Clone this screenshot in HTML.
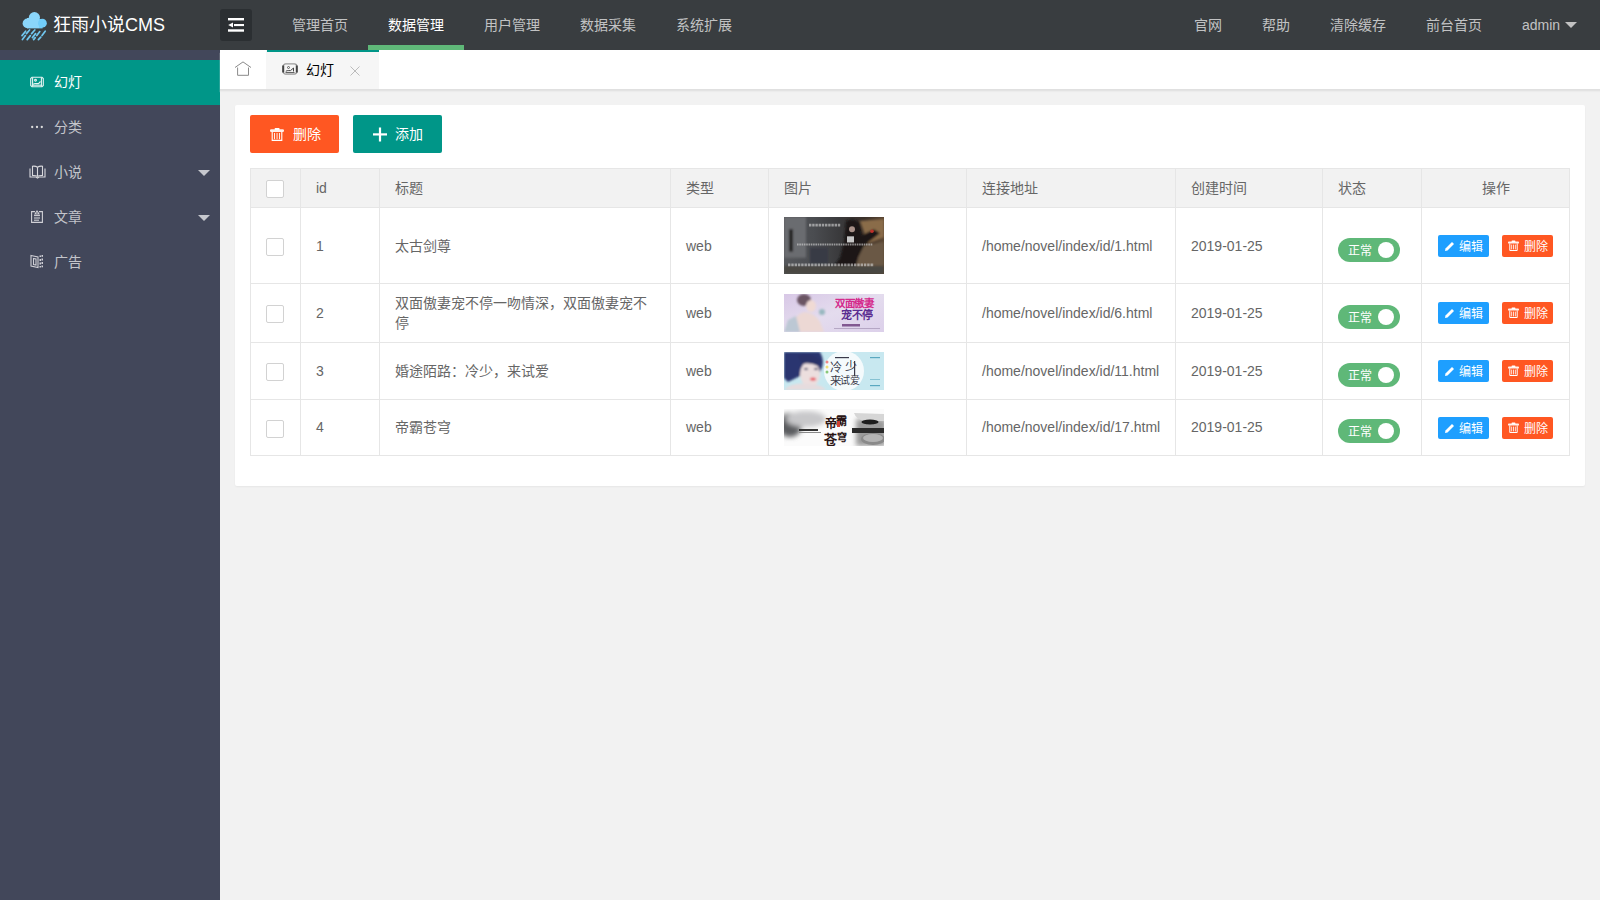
<!DOCTYPE html>
<html lang="zh-CN"><head><meta charset="utf-8">
<style>
*{margin:0;padding:0;box-sizing:border-box}
html,body{width:1600px;height:900px;overflow:hidden}
body{background:#f2f2f2;font-family:"Liberation Sans",sans-serif;font-size:14px;color:#666;position:relative}
.a{position:absolute}
.t{position:absolute;white-space:nowrap;line-height:14px;height:14px;font-size:14px}
#hd{left:0;top:0;width:1600px;height:50px;background:#393d40}
#side{left:0;top:50px;width:220px;height:850px;background:#42475a}
#tabs{left:220px;top:50px;width:1380px;height:39px;background:#fff;box-shadow:0 1px 0 #e0e0e0,0 2px 0 #e3e3e3,0 3px 1px #ececec}
#card{left:235px;top:105px;width:1350px;height:381px;background:#fff;border-radius:2px;box-shadow:0 1px 2px 0 rgba(0,0,0,.05)}
.nav{color:rgba(255,255,255,.7)}
.sd{color:rgba(255,255,255,.7)}
.tri{position:absolute;width:0;height:0;border-left:6px solid transparent;border-right:6px solid transparent;border-top:6px solid #c2c2c2}
.vl{position:absolute;width:1px;background:#e6e6e6}
.hl{position:absolute;height:1px;background:#e6e6e6}
.cb{position:absolute;left:266px;width:18px;height:18px;border:1px solid #d2d2d2;border-radius:2px;background:#fff}
.sw{position:absolute;left:1338px;width:62px;height:24px;border-radius:20px;background:#5fb878}
.sw i{position:absolute;left:40px;top:4px;width:16px;height:16px;border-radius:50%;background:#fff}
.sw span{position:absolute;left:10px;top:7px;font-size:12px;line-height:12px;color:#fff;white-space:nowrap}
.bx{position:absolute;height:22px;width:51px;border-radius:2px;color:#fff;font-size:12px;line-height:12px}
.bx span{position:absolute;left:22px;top:6px;white-space:nowrap}
.be span{left:21px}
.bx svg{position:absolute;left:6px;top:5px}
.be{left:1438px;background:#1e9fff}
.bd{left:1502px;background:#ff5722}
.img{position:absolute;left:784px;width:100px}
</style></head>
<body>
<!-- header -->
<div id="hd" class="a">
  <svg class="a" style="left:0;top:0" width="60" height="50" viewBox="0 0 60 50">
    <g fill="#8ad6fb"><circle cx="34.4" cy="17.6" r="5.6"/><circle cx="27.4" cy="23.4" r="4.8"/><rect x="27" y="18" width="12" height="10.4"/></g>
    <circle cx="42.4" cy="23.2" r="4.4" fill="#72cdf9"/>
    <rect x="39" y="19" width="3.6" height="9.4" fill="#72cdf9"/>
    <g stroke="#70c6ee" stroke-width="1.7" stroke-linecap="round"><line x1="25.6" y1="31.2" x2="22" y2="35.6"/><line x1="29.6" y1="30" x2="26.4" y2="33.6"/><line x1="34.8" y1="30" x2="31.6" y2="33.6"/><line x1="39.8" y1="31.6" x2="36.8" y2="35.6"/><line x1="45.2" y1="31.2" x2="42" y2="35.6"/><line x1="25.4" y1="35.6" x2="22.4" y2="39.6"/><line x1="30.4" y1="35.6" x2="27.2" y2="39.6"/><line x1="35.6" y1="33.6" x2="32.4" y2="37.6"/><line x1="35.2" y1="37.6" x2="33.6" y2="39.6"/><line x1="40.8" y1="37.2" x2="38.4" y2="39.6"/></g>
  </svg>
  <div class="t" style="left:53px;top:16px;font-size:18px;line-height:18px;height:18px;color:#fff">狂雨小说CMS</div>
  <div class="a" style="left:220px;top:9px;width:32px;height:32px;border-radius:3px;background:#2b2f32"></div>
  <svg class="a" style="left:226px;top:16px" width="20" height="18" viewBox="0 0 20 18">
    <g fill="#fff"><rect x="2" y="2" width="16" height="2.4"/><rect x="8" y="8" width="10" height="2.1"/><rect x="2" y="13.3" width="16" height="2.4"/><path d="M2.2 9.05 L7 6.6 L7 11.5 Z"/></g>
  </svg>
  <div class="t nav" style="left:292px;top:18px">管理首页</div>
  <div class="t" style="left:388px;top:18px;color:#fff">数据管理</div>
  <div class="t nav" style="left:484px;top:18px">用户管理</div>
  <div class="t nav" style="left:580px;top:18px">数据采集</div>
  <div class="t nav" style="left:676px;top:18px">系统扩展</div>
  <div class="a" style="left:368px;top:45px;width:96px;height:5px;background:#5fb878"></div>
  <div class="t nav" style="left:1194px;top:18px">官网</div>
  <div class="t nav" style="left:1262px;top:18px">帮助</div>
  <div class="t nav" style="left:1330px;top:18px">清除缓存</div>
  <div class="t nav" style="left:1426px;top:18px">前台首页</div>
  <div class="t nav" style="left:1522px;top:18px">admin</div>
  <div class="tri" style="left:1565px;top:22px"></div>
</div>

<!-- sidebar -->
<div id="side" class="a">
  <div class="a" style="left:0;top:10px;width:220px;height:45px;background:#009688"></div>
</div>
<svg class="a" style="left:30px;top:76px" width="14" height="12" viewBox="0 0 14 12">
  <g fill="none" stroke="#e6f4f2" stroke-width="1.1"><path d="M2 1.3 L12 1.3 L13.3 2.5 L13.3 9.5 L12 10.7 L2 10.7 L0.7 9.5 L0.7 2.5 Z"/><line x1="2.6" y1="1.5" x2="2.6" y2="10.5"/><line x1="11.4" y1="1.5" x2="11.4" y2="10.5"/><line x1="2.6" y1="9.2" x2="11.4" y2="9.2"/><circle cx="5.5" cy="4.2" r="0.9"/><path d="M3.2 8.3 Q4.5 7.2 6 7.6 L8.5 7.6 L10.5 5.5"/></g>
</svg>
<div class="t" style="left:54px;top:75px;color:#fff">幻灯</div>
<svg class="a" style="left:30px;top:125px" width="14" height="4" viewBox="0 0 14 4">
  <g fill="#ddd"><circle cx="2.2" cy="2" r="1.15"/><circle cx="7" cy="2" r="1.15"/><circle cx="11.8" cy="2" r="1.15"/></g>
</svg>
<div class="t sd" style="left:54px;top:120px">分类</div>
<svg class="a" style="left:29px;top:165px" width="17" height="14" viewBox="0 0 17 14">
  <g fill="none" stroke="#d8d8dc" stroke-width="1.1"><path d="M8.5 2.2 Q6.5 0.8 3.5 1.2 L3.5 10.5 Q6.5 10.2 8.5 11.3 Q10.5 10.2 13.5 10.5 L13.5 1.2 Q10.5 0.8 8.5 2.2 Z"/><line x1="8.5" y1="2.2" x2="8.5" y2="11.3"/><path d="M1 3.5 L1 12 L7 12 L8.5 13 L10 12 L16 12 L16 3.5"/></g>
</svg>
<div class="t sd" style="left:54px;top:165px">小说</div>
<div class="tri" style="left:198px;top:170px;border-top-color:rgba(255,255,255,.7)"></div>
<svg class="a" style="left:31px;top:210px" width="12" height="14" viewBox="0 0 12 14">
  <g fill="none" stroke="#d0d0d6" stroke-width="1.1"><path d="M4 1.6 L0.6 1.6 L0.6 12.4 L11.4 12.4 L11.4 1.6 L8 1.6"/><path d="M4 4 L6 1 L8 4 Z"/><line x1="3" y1="5.6" x2="9" y2="5.6"/><line x1="3" y1="8" x2="9" y2="8"/><line x1="3" y1="10.2" x2="8" y2="10.2"/></g>
</svg>
<div class="t sd" style="left:54px;top:210px">文章</div>
<div class="tri" style="left:198px;top:215px;border-top-color:rgba(255,255,255,.7)"></div>
<svg class="a" style="left:30px;top:254px" width="14" height="15" viewBox="0 0 14 15">
  <g fill="none" stroke="#d0d0d6" stroke-width="1.1"><path d="M1 1.5 L8 3 L8 13.5 L1 12 Z"/><path d="M3.5 4.5 L6 5 L6 11 L3.5 10.5 Z"/></g>
  <g fill="#d0d0d6"><rect x="9.5" y="1.5" width="1.5" height="1.5"/><rect x="11.5" y="1" width="1.5" height="1.8"/><rect x="9.5" y="5" width="1.5" height="2"/><rect x="11.5" y="4.5" width="1.5" height="2"/><rect x="9.5" y="8.5" width="1.5" height="2"/><rect x="11.5" y="8" width="1.5" height="2"/><rect x="9.5" y="12" width="1.5" height="1.5"/><rect x="11.5" y="11.5" width="1.5" height="1.8"/></g>
</svg>
<div class="t sd" style="left:54px;top:255px">广告</div>

<!-- tabs -->
<div id="tabs" class="a"></div>
<svg class="a" style="left:234px;top:60px" width="18" height="17" viewBox="0 0 18 17">
  <g fill="none" stroke="#8a8a8a" stroke-width="1"><path d="M1 7.5 L9 1.9 L17 7.5"/><path d="M3.6 7.5 L3.6 15.3 L14.5 15.3 L14.5 7.5"/></g>
</svg>
<div class="a" style="left:266px;top:50px;width:113px;height:39px;background:#f6f6f6"></div>
<div class="a" style="left:267px;top:50px;width:112px;height:2px;background:#009688"></div>
<svg class="a" style="left:282px;top:63px" width="16" height="12" viewBox="0 0 16 12">
  <g fill="none"><rect x="1.2" y="0.9" width="13.6" height="10.2" rx="2.5" stroke="#9a9a9a" stroke-width="1.3"/><line x1="1.2" y1="2.5" x2="1.2" y2="9.5" stroke="#444" stroke-width="2"/><line x1="14.8" y1="2.5" x2="14.8" y2="9.5" stroke="#444" stroke-width="2"/><circle cx="6.5" cy="4.5" r="1" stroke="#555" stroke-width="0.9"/><path d="M3.8 8.3 Q5 7.4 6.8 7.6 L8.5 7.6 L11.5 5 L11.5 8.5" stroke="#444" stroke-width="1"/><line x1="3.5" y1="9.6" x2="12.5" y2="9.6" stroke="#555" stroke-width="1"/></g>
</svg>
<div class="t" style="left:306px;top:63px;color:#000">幻灯</div>
<svg class="a" style="left:350px;top:66px" width="10" height="10" viewBox="0 0 10 10">
  <g stroke="#bbb" stroke-width="1"><line x1="0.5" y1="0.5" x2="9.5" y2="9.5"/><line x1="9.5" y1="0.5" x2="0.5" y2="9.5"/></g>
</svg>

<!-- card -->
<div id="card" class="a"></div>
<div class="a" style="left:250px;top:115px;width:89px;height:38px;border-radius:2px;background:#ff5722"></div>
<svg class="a" style="left:270px;top:128px" width="14" height="14" viewBox="0 0 14 14">
  <g fill="#fff"><rect x="0" y="1.3" width="14" height="2.6" rx="1.2" opacity=".9"/><rect x="4.6" y="0" width="5" height="2" rx="0.8"/><rect x="4.1" y="5" width="0.9" height="6.2"/><rect x="6.6" y="5" width="0.9" height="6.2"/><rect x="9.1" y="5" width="0.9" height="6.2"/></g>
  <path d="M2.2 3.8 L2.2 12.4 L11.8 12.4 L11.8 3.8" fill="none" stroke="#fff" stroke-width="1.1"/>
</svg>
<div class="t" style="left:293px;top:127px;color:#fff">删除</div>
<div class="a" style="left:353px;top:115px;width:89px;height:38px;border-radius:2px;background:#009688"></div>
<svg class="a" style="left:372px;top:127px" width="16" height="15" viewBox="0 0 16 15">
  <g fill="#fff"><rect x="1" y="6.3" width="14" height="2.2"/><rect x="6.9" y="0.5" width="2.2" height="14"/></g>
</svg>
<div class="t" style="left:395px;top:127px;color:#fff">添加</div>

<!-- table -->
<div class="a" style="left:250px;top:168px;width:1320px;height:288px;border:1px solid #e6e6e6;background:#fff"></div>
<div class="a" style="left:251px;top:169px;width:1318px;height:38px;background:#f2f2f2"></div>
<div class="hl" style="left:250px;top:207px;width:1320px"></div>
<div class="hl" style="left:250px;top:283px;width:1320px"></div>
<div class="hl" style="left:250px;top:342px;width:1320px"></div>
<div class="hl" style="left:250px;top:399px;width:1320px"></div>
<div class="vl" style="left:300px;top:168px;height:288px"></div>
<div class="vl" style="left:379px;top:168px;height:288px"></div>
<div class="vl" style="left:670px;top:168px;height:288px"></div>
<div class="vl" style="left:768px;top:168px;height:288px"></div>
<div class="vl" style="left:966px;top:168px;height:288px"></div>
<div class="vl" style="left:1175px;top:168px;height:288px"></div>
<div class="vl" style="left:1322px;top:168px;height:288px"></div>
<div class="vl" style="left:1421px;top:168px;height:288px"></div>

<!-- header row -->
<div class="cb" style="top:180px"></div>
<div class="t" style="left:316px;top:181px">id</div>
<div class="t" style="left:395px;top:181px">标题</div>
<div class="t" style="left:686px;top:181px">类型</div>
<div class="t" style="left:784px;top:181px">图片</div>
<div class="t" style="left:982px;top:181px">连接地址</div>
<div class="t" style="left:1191px;top:181px">创建时间</div>
<div class="t" style="left:1338px;top:181px">状态</div>
<div class="t" style="left:1482px;top:181px">操作</div>

<!-- row 1 -->
<div class="cb" style="top:238px"></div>
<div class="t" style="left:316px;top:239px">1</div>
<div class="t" style="left:395px;top:239px">太古剑尊</div>
<div class="t" style="left:686px;top:239px">web</div>
<div class="t" style="left:982px;top:239px">/home/novel/index/id/1.html</div>
<div class="t" style="left:1191px;top:239px">2019-01-25</div>
<div class="sw" style="top:238px"><span>正常</span><i></i></div>
<div class="bx be" style="top:235px"><svg width="11" height="12" viewBox="0 0 11 12"><path d="M1 11 L1.5 8.5 L8 2 L10 4 L3.5 10.5 Z" fill="#fff"/></svg><span>编辑</span></div>
<div class="bx bd" style="top:235px"><svg width="11" height="12" viewBox="0 0 11 12"><g fill="#fff"><rect x="0" y="1.6" width="11" height="2" rx="0.9" opacity=".92"/><rect x="3.6" y="0.5" width="3.8" height="1.6" rx="0.6"/><rect x="3.3" y="4.6" width="0.8" height="4.8"/><rect x="5.1" y="4.6" width="0.8" height="4.8"/><rect x="6.9" y="4.6" width="0.8" height="4.8"/></g><path d="M1.8 3.4 L1.8 10.5 L9.2 10.5 L9.2 3.4" fill="none" stroke="#fff" stroke-width="1"/></svg><span>删除</span></div>

<!-- row 2 -->
<div class="cb" style="top:305px"></div>
<div class="t" style="left:316px;top:306px">2</div>
<div class="t" style="left:395px;top:296px">双面傲妻宠不停一吻情深，双面傲妻宠不</div>
<div class="t" style="left:395px;top:316px">停</div>
<div class="t" style="left:686px;top:306px">web</div>
<div class="t" style="left:982px;top:306px">/home/novel/index/id/6.html</div>
<div class="t" style="left:1191px;top:306px">2019-01-25</div>
<div class="sw" style="top:305px"><span>正常</span><i></i></div>
<div class="bx be" style="top:302px"><svg width="11" height="12" viewBox="0 0 11 12"><path d="M1 11 L1.5 8.5 L8 2 L10 4 L3.5 10.5 Z" fill="#fff"/></svg><span>编辑</span></div>
<div class="bx bd" style="top:302px"><svg width="11" height="12" viewBox="0 0 11 12"><g fill="#fff"><rect x="0" y="1.6" width="11" height="2" rx="0.9" opacity=".92"/><rect x="3.6" y="0.5" width="3.8" height="1.6" rx="0.6"/><rect x="3.3" y="4.6" width="0.8" height="4.8"/><rect x="5.1" y="4.6" width="0.8" height="4.8"/><rect x="6.9" y="4.6" width="0.8" height="4.8"/></g><path d="M1.8 3.4 L1.8 10.5 L9.2 10.5 L9.2 3.4" fill="none" stroke="#fff" stroke-width="1"/></svg><span>删除</span></div>

<!-- row 3 -->
<div class="cb" style="top:363px"></div>
<div class="t" style="left:316px;top:364px">3</div>
<div class="t" style="left:395px;top:364px">婚途陌路：冷少，来试爱</div>
<div class="t" style="left:686px;top:364px">web</div>
<div class="t" style="left:982px;top:364px">/home/novel/index/id/11.html</div>
<div class="t" style="left:1191px;top:364px">2019-01-25</div>
<div class="sw" style="top:363px"><span>正常</span><i></i></div>
<div class="bx be" style="top:360px"><svg width="11" height="12" viewBox="0 0 11 12"><path d="M1 11 L1.5 8.5 L8 2 L10 4 L3.5 10.5 Z" fill="#fff"/></svg><span>编辑</span></div>
<div class="bx bd" style="top:360px"><svg width="11" height="12" viewBox="0 0 11 12"><g fill="#fff"><rect x="0" y="1.6" width="11" height="2" rx="0.9" opacity=".92"/><rect x="3.6" y="0.5" width="3.8" height="1.6" rx="0.6"/><rect x="3.3" y="4.6" width="0.8" height="4.8"/><rect x="5.1" y="4.6" width="0.8" height="4.8"/><rect x="6.9" y="4.6" width="0.8" height="4.8"/></g><path d="M1.8 3.4 L1.8 10.5 L9.2 10.5 L9.2 3.4" fill="none" stroke="#fff" stroke-width="1"/></svg><span>删除</span></div>

<!-- row 4 -->
<div class="cb" style="top:420px"></div>
<div class="t" style="left:316px;top:420px">4</div>
<div class="t" style="left:395px;top:420px">帝霸苍穹</div>
<div class="t" style="left:686px;top:420px">web</div>
<div class="t" style="left:982px;top:420px">/home/novel/index/id/17.html</div>
<div class="t" style="left:1191px;top:420px">2019-01-25</div>
<div class="sw" style="top:419px"><span>正常</span><i></i></div>
<div class="bx be" style="top:417px"><svg width="11" height="12" viewBox="0 0 11 12"><path d="M1 11 L1.5 8.5 L8 2 L10 4 L3.5 10.5 Z" fill="#fff"/></svg><span>编辑</span></div>
<div class="bx bd" style="top:417px"><svg width="11" height="12" viewBox="0 0 11 12"><g fill="#fff"><rect x="0" y="1.6" width="11" height="2" rx="0.9" opacity=".92"/><rect x="3.6" y="0.5" width="3.8" height="1.6" rx="0.6"/><rect x="3.3" y="4.6" width="0.8" height="4.8"/><rect x="5.1" y="4.6" width="0.8" height="4.8"/><rect x="6.9" y="4.6" width="0.8" height="4.8"/></g><path d="M1.8 3.4 L1.8 10.5 L9.2 10.5 L9.2 3.4" fill="none" stroke="#fff" stroke-width="1"/></svg><span>删除</span></div>

<!-- images -->
<svg class="img" style="top:217px" width="100" height="57" viewBox="0 0 100 56" preserveAspectRatio="none">
  <defs>
    <filter id="b1" x="-10%" y="-10%" width="120%" height="120%"><feGaussianBlur stdDeviation="1.2"/></filter>
    <filter id="b05"><feGaussianBlur stdDeviation="0.45"/></filter>
    <linearGradient id="g1" x1="0" y1="0" x2="1" y2="0"><stop offset="0" stop-color="#56585c"/><stop offset="0.3" stop-color="#4a4c50"/><stop offset="0.55" stop-color="#3a3a3c"/><stop offset="0.8" stop-color="#3a302a"/><stop offset="1" stop-color="#5a4632"/></linearGradient>
  </defs>
  <rect width="100" height="56" fill="url(#g1)"/>
  <g filter="url(#b1)">
    <rect x="0" y="0" width="22" height="40" fill="#6a6c70"/>
    <rect x="5" y="12" width="4" height="22" fill="#202022"/>
    <rect x="26" y="30" width="18" height="16" fill="#383a44"/>
    <path d="M76 4 L100 2 L100 20 L84 26 Z" fill="#8a6c48"/>
    <path d="M72 30 L100 24 L100 56 L64 56 Z" fill="#6a5844"/>
    <path d="M62 4 Q70 0 76 6 L78 18 L90 12 L96 16 L80 28 L74 40 L70 56 L44 56 L56 40 L60 24 Z" fill="#1a1818"/>
    <rect x="0" y="48" width="100" height="8" fill="#4a4642"/>
  </g>
  <circle cx="68" cy="12" r="3" fill="#a89088" filter="url(#b05)"/>
  <rect x="63" y="19" width="7" height="6" fill="#c8c8c8" filter="url(#b05)"/>
  <circle cx="88" cy="14" r="1.8" fill="#c0302a"/>
  <g stroke="#d8d8d8" filter="url(#b05)" opacity=".6"><line x1="25" y1="8" x2="57" y2="8" stroke-width="2.6" stroke-dasharray="2.4 0.8"/><line x1="13" y1="27" x2="89" y2="27" stroke-width="2" stroke-dasharray="1.6 0.7"/><line x1="4" y1="47" x2="90" y2="47" stroke-width="2.6" stroke-dasharray="2.4 0.9"/></g>
</svg>
<svg class="img" style="top:294px" width="100" height="38" viewBox="0 0 100 38">
  <defs>
    <filter id="b2" x="-10%" y="-10%" width="120%" height="120%"><feGaussianBlur stdDeviation="1"/></filter>
    <linearGradient id="g2" x1="0" y1="0" x2="1" y2="1"><stop offset="0" stop-color="#d8c8e6"/><stop offset="0.5" stop-color="#e4dcee"/><stop offset="1" stop-color="#dcd0ea"/></linearGradient>
  </defs>
  <rect width="100" height="38" fill="url(#g2)"/>
  <g filter="url(#b2)">
    <path d="M8 38 Q8 22 20 18 Q30 18 36 28 L40 38 Z" fill="#ecd8d4"/>
    <path d="M0 38 L4 26 L12 22 L16 38 Z" fill="#bcc8d4"/>
    <ellipse cx="20" cy="6" rx="7" ry="6" fill="#6a5464"/>
    <ellipse cx="27" cy="12" rx="5" ry="6" fill="#f0dad4"/>
    <ellipse cx="38" cy="18" rx="3" ry="3" fill="#98b8c0"/>
  </g>
  <text x="51" y="12.5" font-family="Liberation Serif, serif" font-size="10.5" fill="#d42a8c" font-weight="bold" letter-spacing="-0.5">双面傲妻</text>
  <text x="57" y="25" font-family="Liberation Serif, serif" font-size="11" fill="#5a2c90" font-weight="bold" letter-spacing="-0.5">宠不停</text>
  <rect x="58" y="30" width="18" height="2.5" fill="#6a3a7a" opacity=".8"/>
  <rect x="50" y="34" width="46" height="1" fill="#9a88aa" opacity=".6"/>
</svg>
<svg class="img" style="top:352px" width="100" height="38" viewBox="0 0 100 38">
  <defs>
    <filter id="b3" x="-10%" y="-10%" width="120%" height="120%"><feGaussianBlur stdDeviation="0.9"/></filter>
  </defs>
  <rect width="100" height="38" fill="#c8e8f0"/>
  <g filter="url(#b3)">
    <path d="M0 0 L36 0 Q42 10 36 20 L28 18 L16 24 L4 30 L0 26 Z" fill="#2c3470"/>
    <ellipse cx="26" cy="22" rx="10" ry="13" fill="#ecdede"/>
    <path d="M0 38 Q8 30 24 32 Q38 32 42 38 Z" fill="#e6dcde"/>
    <path d="M14 4 Q26 0 36 8 L34 14 Q26 10 18 12 Z" fill="#2a3068"/>
    <ellipse cx="29" cy="27" rx="3" ry="1.6" fill="#e8505a"/>
    <ellipse cx="22" cy="17" rx="2" ry="1" fill="#3a3a60"/><ellipse cx="32" cy="17" rx="2" ry="1" fill="#3a3a60"/>
  </g>
  <circle cx="60" cy="19" r="20" fill="#f4fafc"/>
  <g font-family="Liberation Serif, serif" fill="#3a3a4a"><rect x="51" y="5" width="14" height="1.2"/><text x="46" y="20" font-size="12">冷</text><text x="61" y="19" font-size="12">少</text><text x="46" y="33" font-size="11.5">来</text><text x="56" y="32" font-size="10">试爱</text><rect x="70" y="9" width="1.2" height="15"/></g>
  <circle cx="43" cy="10" r="1.5" fill="#f08888"/><circle cx="43" cy="15" r="1.5" fill="#f0e078"/><circle cx="43" cy="20" r="1.5" fill="#88c878"/>
  <g fill="#5aa8c0"><rect x="86" y="5" width="10" height="1.2"/><rect x="86" y="33" width="10" height="1.2"/><rect x="86" y="27" width="10" height="1" opacity=".6"/></g>
</svg>
<svg class="img" style="top:409px" width="100" height="37" viewBox="0 0 100 37">
  <defs>
    <filter id="b4" x="-20%" y="-20%" width="140%" height="140%"><feGaussianBlur stdDeviation="2.5"/></filter>
    <filter id="b4s"><feGaussianBlur stdDeviation="0.5"/></filter>
  </defs>
  <rect width="100" height="37" fill="#fbfbfb"/>
  <g filter="url(#b4)">
    <ellipse cx="6" cy="16" rx="12" ry="12" fill="#5a5c5e"/>
    <ellipse cx="22" cy="10" rx="20" ry="8" fill="#c8c8ca"/>
    <rect x="72" y="10" width="30" height="27" fill="#9a9a9a"/>
  </g>
  <g filter="url(#b4s)">
    <path d="M70 4 L100 5 L100 12 L80 12 Q72 10 70 4 Z" fill="#d6d6d6"/>
    <ellipse cx="86" cy="13" rx="8.5" ry="2.6" fill="#1c1c1c"/>
    <rect x="68" y="19" width="32" height="5" fill="#2a2a2a"/>
    <ellipse cx="89" cy="30" rx="12" ry="6" fill="#8a8a8a"/>
    <ellipse cx="89" cy="29" rx="10" ry="4" fill="#b4b4b4"/>
  </g>
  <rect x="15" y="20" width="19" height="2" fill="#333"/>
  <rect x="15" y="23" width="22" height="1" fill="#8a8a8a"/>
  <g font-family="Liberation Serif, serif" fill="#2a1414" font-weight="bold"><text x="41" y="19" font-size="12">帝</text><text x="52" y="16" font-size="11">霸</text><text x="40" y="35" font-size="13">苍</text><text x="53" y="32" font-size="10">穹</text></g>
  <rect x="53" y="12" width="3" height="6" fill="#d04030" filter="url(#b4s)"/>
</svg>

</body></html>
